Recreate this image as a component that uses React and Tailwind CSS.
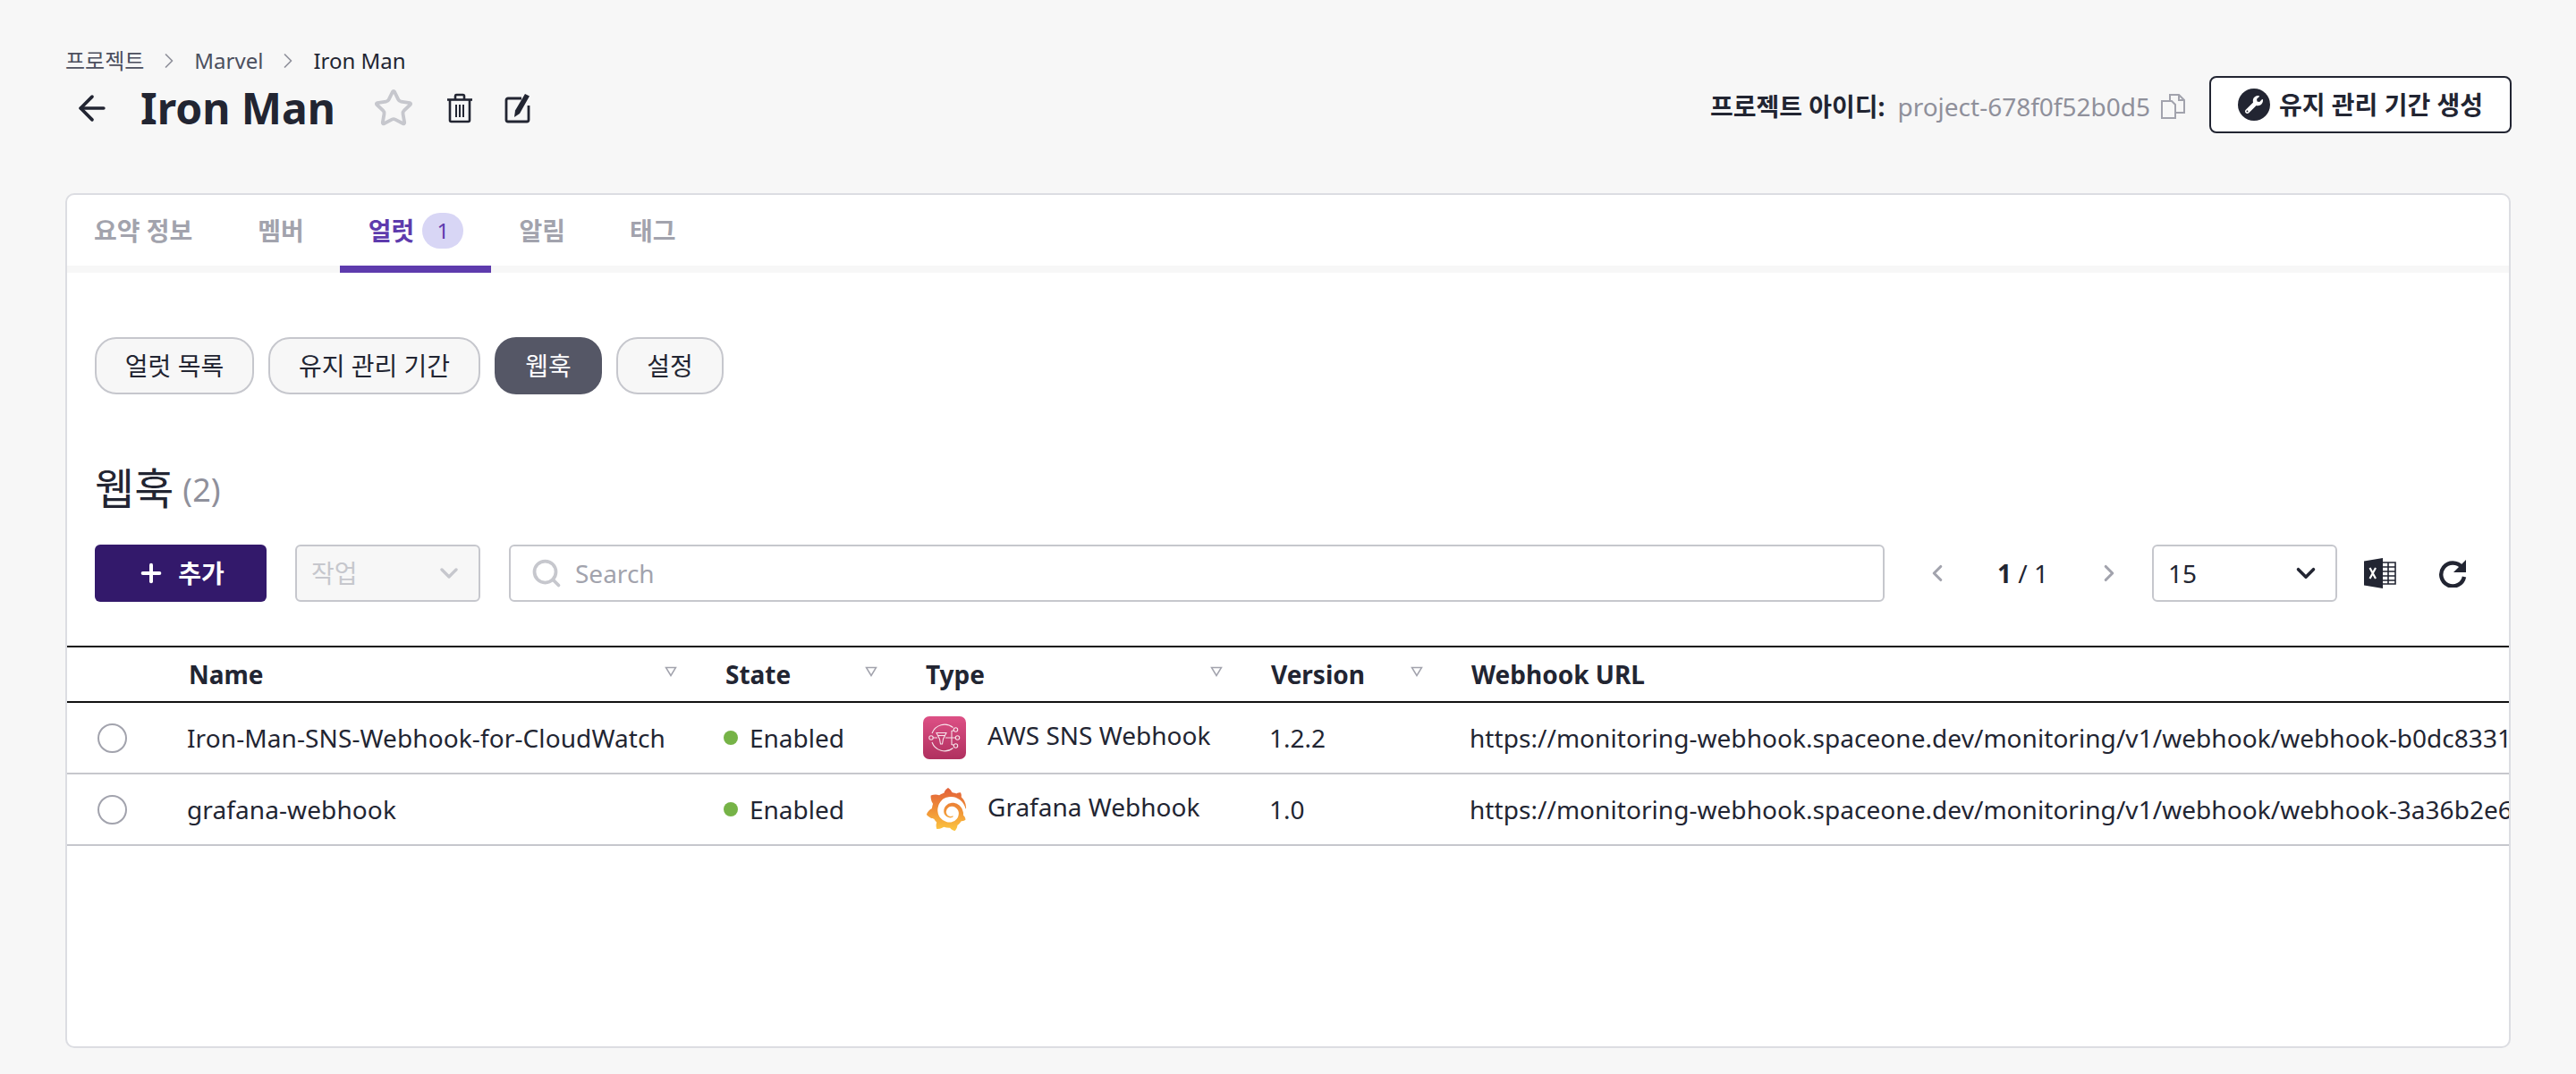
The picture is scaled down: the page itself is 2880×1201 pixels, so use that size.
import React from 'react';
import { ChevronDown, ChevronLeft, ChevronRight, Plus, Search, ArrowLeft, Star } from 'lucide-react';
import { FaWrench } from 'react-icons/fa';
import { SiGrafana } from 'react-icons/si';

const FONT = { fontFamily: '"Noto Sans", "Noto Sans CJK KR", sans-serif' };

const rows = [
  {
    name: 'Iron-Man-SNS-Webhook-for-CloudWatch',
    type: 'AWS SNS Webhook',
    icon: 'sns',
    version: '1.2.2',
    url: 'https://monitoring-webhook.spaceone.dev/monitoring/v1/webhook/webhook-b0dc83315a7e4c21/4f1c',
  },
  {
    name: 'grafana-webhook',
    type: 'Grafana Webhook',
    icon: 'grafana',
    version: '1.0',
    url: 'https://monitoring-webhook.spaceone.dev/monitoring/v1/webhook/webhook-3a36b2e6d41f7a90/8c2e',
  },
];

function TrashIcon() {
  return (
    <svg width="30" height="34" viewBox="0 0 30 34" fill="none" stroke="#222532" strokeWidth="2.600">
      <path d="M1 7.500h28" />
      <path d="M10 7V3.500A1.500 1.500 0 0 1 11.500 2h7A1.500 1.500 0 0 1 20 3.500V7" />
      <path d="M4 8v22.500A1.500 1.500 0 0 0 5.500 32h19a1.500 1.500 0 0 0 1.500-1.500V8" />
      <path d="M11 13v14M15 13v14M19 13v14" strokeWidth="2" />
    </svg>
  );
}

function EditIcon() {
  return (
    <svg width="30" height="34" viewBox="0 0 30 34" fill="none">
      <path d="M19 6H4a2 2 0 0 0-2 2v22a2 2 0 0 0 2 2h21a2 2 0 0 0 2-2V14" stroke="#222532" strokeWidth="2.800" />
      <path d="M23 1l5 2.500L17 23l-6 4 1-7.500z" fill="#222532" />
    </svg>
  );
}

function CopyIcon() {
  return (
    <svg width="30" height="30" viewBox="0 0 30 30" fill="none" stroke="#a2a3ad" strokeWidth="2">
      <path d="M2 9h11l4 4v15H2z" fill="#f7f7f7" />
      <path d="M11 9V2h10l6 6v14H17" />
      <path d="M21 2v6h6" />
    </svg>
  );
}

function ExcelIcon() {
  return (
    <svg width="36" height="34" viewBox="0 0 36 34">
      <path d="M0 3.500 21 0v34L0 30.500z" fill="#222532" />
      <path d="M6.500 11l6.500 12M13 11 6.500 23" stroke="#fff" strokeWidth="2.200" />
      <path d="M21 5h14v24H21M21 10h14M21 15h14M21 20h14M21 25h14M27 5v24" fill="none" stroke="#222532" strokeWidth="1.600" />
    </svg>
  );
}

function RefreshIcon() {
  return (
    <svg width="32" height="32" viewBox="0 0 32 32" fill="none">
      <path d="M26.500 9.500A13 13 0 1 0 29 20" stroke="#222532" strokeWidth="4.400" />
      <path d="M31 1v14H17z" fill="#222532" />
    </svg>
  );
}

function SnsIcon() {
  return (
    <svg width="48" height="48" viewBox="0 0 48 48" fill="none">
      <defs>
        <linearGradient id="sns-grad" x1="0" y1="1" x2="0" y2="0">
          <stop offset="0" stopColor="#b0305f" />
          <stop offset="1" stopColor="#dd5085" />
        </linearGradient>
      </defs>
      <rect width="48" height="48" rx="7" fill="url(#sns-grad)" />
      <g stroke="#fff" strokeWidth="1.100" opacity="0.85">
        <path d="M10 19A15 15 0 0 1 33.500 12.500M10 29A15 15 0 0 0 33.500 35.500" />
        <circle cx="9" cy="24" r="2.200" />
        <circle cx="36.500" cy="15" r="2.200" />
        <circle cx="38.500" cy="24" r="2.200" />
        <circle cx="36.500" cy="33" r="2.200" />
        <path d="M11 24h5M25 24h11M32 24v-7.500l2.500-.8M32 24v7.500l2.500.8" />
        <path d="M15 18.500h11l-3.500 7-1 5.500h-2l-1-5.500z" />
        <path d="M16.500 21.500h8" />
      </g>
    </svg>
  );
}

function GrafanaIcon() {
  return (
    <span className="ml-[2px] -mr-[2px] flex">
      <svg width="48" height="48" viewBox="0 0 48 48">
        <defs>
          <linearGradient id="grafana-grad" x1="0" y1="1" x2="0" y2="0">
            <stop offset="0" stopColor="#fcc640" />
            <stop offset="0.550" stopColor="#ee8a37" />
            <stop offset="1" stopColor="#e2603a" />
          </linearGradient>
        </defs>
        <foreignObject width="48" height="48">
          <SiGrafana size={48} fill="url(#grafana-grad)" />
        </foreignObject>
      </svg>
    </span>
  );
}

function SortIcon() {
  return (
    <svg width="14" height="12" viewBox="0 0 14 12" fill="none" stroke="#a2a3ad" strokeWidth="1.500">
      <path d="M1.500 1.500h11L7 10.500z" />
    </svg>
  );
}

function Header({ label, sort }) {
  return (
    <th className="px-[20px] text-left text-[28px] font-bold">
      <div className="flex items-center justify-between">
        <span>{label}</span>
        {sort && <span className="-mt-[6px] mr-[14px] flex"><SortIcon /></span>}
      </div>
    </th>
  );
}

export default function App() {
  return (
    <div className="min-h-screen bg-[#f7f7f7] px-[73px] pt-[50px] text-[#222532]" style={FONT}>
      <div className="flex h-[36px] items-center text-[24px] text-[#4c4f5e]">
        <span>프로젝트</span>
        <ChevronRight size={28} className="mx-[14px] text-[#8f909b]" strokeWidth={1.500} />
        <span>Marvel</span>
        <ChevronRight size={28} className="mx-[14px] text-[#8f909b]" strokeWidth={1.500} />
        <span className="text-[#222532]">Iron Man</span>
      </div>

      <div className="mt-[1px] flex h-[64px] items-center justify-between">
        <div className="mt-[3px] flex items-center">
          <ArrowLeft size={44} className="ml-[8px]" strokeWidth={2} />
          <h1 className="ml-[32px] text-[48px] font-bold">Iron Man</h1>
          <Star size={46} className="ml-[42px] text-[#c6c7cd]" strokeWidth={2} />
          <span className="ml-[36px] flex"><TrashIcon /></span>
          <span className="ml-[35px] flex"><EditIcon /></span>
        </div>
        <div className="-mr-[1px] flex items-center">
          <span className="text-[28px] font-bold">프로젝트 아이디:</span>
          <span className="ml-[14px] text-[28px] text-[#8f909b]">project-678f0f52b0d5</span>
          <span className="ml-[11px] flex"><CopyIcon /></span>
          <button className="ml-[25px] -mt-[4px] flex h-[64px] w-[338px] items-center justify-center rounded-[8px] border-2 border-[#222532] bg-white text-[28px] font-semibold">
            <span className="mr-[10px] flex h-[36px] w-[36px] items-center justify-center rounded-full bg-[#222532]">
              <FaWrench size={20} className="text-white" />
            </span>
            유지 관리 기간 생성
          </button>
        </div>
      </div>

      <div className="mt-[65px] h-[956px] overflow-hidden rounded-[10px] border-2 border-[#dcdde2] bg-white">
        <div className="flex h-[79px] text-[28px] font-bold text-[#a2a3ad]">
          <div className="flex items-center pl-[30px] pr-[32px]">요약 정보</div>
          <div className="ml-[9px] flex items-center px-[32px]">멤버</div>
          <div className="ml-[8px] flex items-center px-[32px] text-[#5e3bad]">
            얼럿
            <span className="ml-[9px] flex h-[40px] w-[46px] items-center justify-center rounded-full bg-[#d8d6f5] text-[24px] font-normal">1</span>
          </div>
          <div className="-ml-[2px] flex items-center px-[32px]">알림</div>
          <div className="ml-[8px] flex items-center px-[32px]">태그</div>
        </div>
        <div className="flex h-[8px] bg-[#f7f7f7]">
          <div className="ml-[305px] w-[169px] bg-[#5e3bad]" />
        </div>

        <div className="px-[31px] pt-[72px]">
          <div className="flex gap-[16px] text-[28px]">
            <button className="h-[64px] w-[178px] rounded-[24px] border-2 border-[#c6c7cd] bg-[#f7f7f7]">얼럿 목록</button>
            <button className="h-[64px] w-[237px] rounded-[24px] border-2 border-[#c6c7cd] bg-[#f7f7f7]">유지 관리 기간</button>
            <button className="h-[64px] w-[120px] rounded-[24px] bg-[#555766] text-white">웹훅</button>
            <button className="h-[64px] w-[120px] rounded-[24px] border-2 border-[#c6c7cd] bg-[#f7f7f7]">설정</button>
          </div>

          <div className="mt-[73px] flex h-[64px] items-center">
            <span className="text-[48px]">웹훅</span>
            <span className="ml-[10px] mt-[4px] text-[36px] text-[#8f909b]">(2)</span>
          </div>

          <div className="mt-[31px] flex h-[64px] items-center">
            <button className="flex h-[64px] w-[192px] items-center justify-center rounded-[6px] bg-[#33196b] text-[28px] font-bold text-white">
              <Plus size={32} strokeWidth={3} className="mr-[14px]" />
              추가
            </button>
            <div className="ml-[32px] flex h-[64px] w-[207px] items-center justify-between rounded-[6px] border-2 border-[#c6c7cd] bg-[#f7f7f7] pl-[16px] pr-[17px] text-[28px] text-[#c6c7cd]">
              작업
              <ChevronDown size={32} strokeWidth={2.500} />
            </div>
            <div className="ml-[32px] flex h-[64px] flex-1 items-center rounded-[6px] border-2 border-[#c6c7cd] bg-white pl-[22px] text-[28px] text-[#a2a3ad]">
              <Search size={36} strokeWidth={2.500} className="mr-[14px] text-[#c6c7cd]" />
              Search
            </div>
            <ChevronLeft size={30} strokeWidth={2.500} className="ml-[44px] text-[#a2a3ad]" />
            <div className="ml-[52px] text-[28px]"><span className="font-bold">1</span> / 1</div>
            <ChevronRight size={30} strokeWidth={2.500} className="ml-[53px] text-[#a2a3ad]" />
            <div className="ml-[33px] flex h-[64px] w-[207px] items-center justify-between rounded-[6px] border-2 border-[#c6c7cd] bg-white pl-[16px] pr-[16px] text-[28px]">
              15
              <ChevronDown size={34} strokeWidth={2.500} />
            </div>
            <span className="ml-[30px] flex"><ExcelIcon /></span>
            <span className="ml-[47px] mr-[16px] flex"><RefreshIcon /></span>
          </div>
        </div>

        <table className="mt-[49px] w-[2732px] table-fixed border-collapse">
          <colgroup>
            <col className="w-[116px]" />
            <col className="w-[600px]" />
            <col className="w-[224px]" />
            <col className="w-[386px]" />
            <col className="w-[224px]" />
            <col />
          </colgroup>
          <thead>
            <tr className="h-[62px] border-y-2 border-[#111]">
              <th />
              <Header label="Name" sort />
              <Header label="State" sort />
              <Header label="Type" sort />
              <Header label="Version" sort />
              <Header label="Webhook URL" />
            </tr>
          </thead>
          <tbody className="text-[28px]">
            {rows.map((row) => (
              <tr key={row.name} className="h-[80px] border-b-2 border-[#c6c7cd]">
                <td className="pl-[34px]">
                  <span className="block h-[33px] w-[33px] rounded-full border-2 border-[#a2a3ad]" />
                </td>
                <td className="whitespace-nowrap px-[18px] tracking-[0.1px]">{row.name}</td>
                <td className="px-[18px]">
                  <div className="flex items-center">
                    <span className="mr-[13px] h-[16px] w-[16px] rounded-full bg-[#76b347]" />
                    Enabled
                  </div>
                </td>
                <td className="px-[17px]">
                  <div className="flex items-center">
                    {row.icon === 'sns' ? <SnsIcon /> : <GrafanaIcon />}
                    <span className="ml-[24px] -mt-[6px] whitespace-nowrap">{row.type}</span>
                  </div>
                </td>
                <td className="px-[18px]">{row.version}</td>
                <td className="whitespace-nowrap px-[18px] tracking-[0.05px]">{row.url}</td>
              </tr>
            ))}
          </tbody>
        </table>
      </div>
    </div>
  );
}
